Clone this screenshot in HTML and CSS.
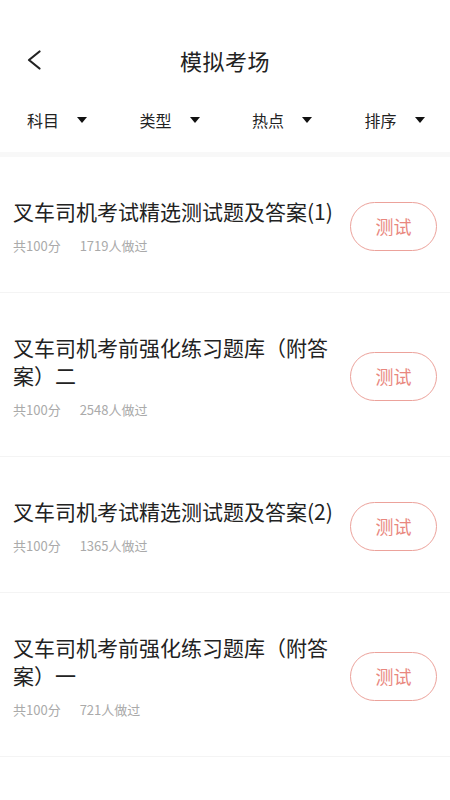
FILE: index.html
```html
<!DOCTYPE html>
<html lang="zh-CN">
<head>
<meta charset="utf-8">
<title>模拟考场</title>
<link rel="stylesheet" href="styles.css">
</head>
<body>
<div class="page">
  <header class="nav">
    <div class="nav-left">
      <svg class="back" width="16" height="20" viewBox="0 0 16 20"><polyline points="13.5,1.5 3,10 13.5,18.5" fill="none" stroke="#222" stroke-width="2.2" stroke-linecap="round" stroke-linejoin="round"/></svg>
    </div>
    <div class="nav-title">模拟考场</div>
    <div class="nav-right"></div>
  </header>
  <div class="filters">
    <div class="filter"><span>科目</span><i class="tri"></i></div>
    <div class="filter"><span>类型</span><i class="tri"></i></div>
    <div class="filter"><span>热点</span><i class="tri"></i></div>
    <div class="filter"><span>排序</span><i class="tri"></i></div>
  </div>
  <div class="band"></div>
  <ul class="list">
    <li class="item">
      <div class="info">
        <div class="title">叉车司机考试精选测试题及答案(1)</div>
        <div class="meta"><span>共100分</span><span>1719人做过</span></div>
      </div>
      <div class="btn">测试</div>
    </li>
    <li class="item">
      <div class="info">
        <div class="title">叉车司机考前强化练习题库（附答案）二</div>
        <div class="meta"><span>共100分</span><span>2548人做过</span></div>
      </div>
      <div class="btn">测试</div>
    </li>
    <li class="item">
      <div class="info">
        <div class="title">叉车司机考试精选测试题及答案(2)</div>
        <div class="meta"><span>共100分</span><span>1365人做过</span></div>
      </div>
      <div class="btn">测试</div>
    </li>
    <li class="item">
      <div class="info">
        <div class="title">叉车司机考前强化练习题库（附答案）一</div>
        <div class="meta"><span>共100分</span><span>721人做过</span></div>
      </div>
      <div class="btn">测试</div>
    </li>
    <li class="item">
      <div class="info">
        <div class="title">叉车司机考试精选测试题及答案(3)</div>
        <div class="meta"><span>共100分</span><span>1102人做过</span></div>
      </div>
      <div class="btn">测试</div>
    </li>
  </ul>
</div>
</body>
</html>
```
FILE: styles.css
```css
* { box-sizing: border-box; }
html, body { margin: 0; padding: 0; background: #fff; }
body {
  font-family: "Noto Sans CJK SC", "Noto Sans", sans-serif;
  color: #222;
  width: 450px;
  overflow: hidden;
}
.page { width: 450px; }
.nav {
  display: grid;
  grid-template-columns: 1fr auto 1fr;
  align-items: center;
  height: 48px;
  margin-top: 36px;
}
.nav-left { padding-left: 26px; display: flex; align-items: center; }
.back { display: block; }
.nav-title {
  font-size: 22px;
  line-height: 30px;
  color: #222;
  letter-spacing: 0.5px;
}
.filters {
  display: grid;
  grid-template-columns: repeat(4, 1fr);
  padding: 24px 0 20px;
}
.filter {
  display: flex;
  align-items: center;
  padding-left: 27px;
  font-size: 16px;
  line-height: 24px;
  color: #222;
}
.tri {
  display: block;
  width: 0;
  height: 0;
  margin-left: 18px;
  border-left: 5px solid transparent;
  border-right: 5px solid transparent;
  border-top: 6px solid #111;
}
.band { height: 5px; background: #f8f8f8; }
.list { list-style: none; margin: 0; padding: 0; }
.item {
  display: flex;
  align-items: center;
  gap: 12px;
  padding: 40px 13px 37px;
  border-bottom: 1px solid #f4f4f4;
}
.info { flex: 1; min-width: 0; }
.title {
  font-size: 21px;
  line-height: 28px;
  color: #222;
}
.meta {
  display: flex;
  gap: 19px;
  margin-top: 12px;
  font-size: 13px;
  line-height: 18px;
  color: #aaa;
}
.btn {
  flex: none;
  width: 87px;
  height: 49px;
  border: 1.5px solid #eca29b;
  border-radius: 25px;
  display: flex;
  align-items: center;
  justify-content: center;
  font-size: 18px;
  color: #e9877e;
}
```
